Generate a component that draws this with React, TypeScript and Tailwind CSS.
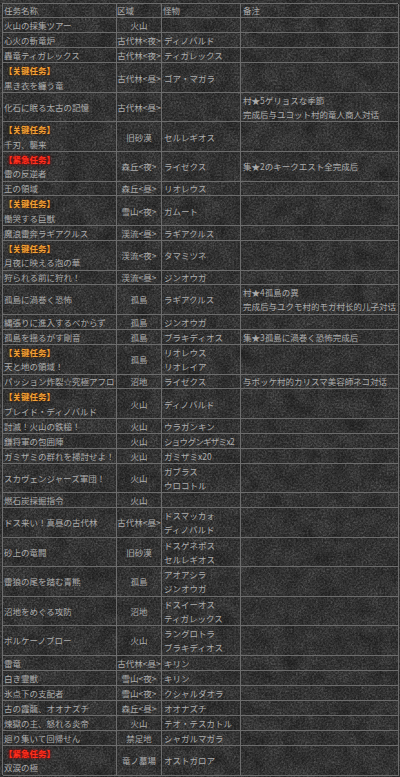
import React from 'react';

type Row = {
  tag?: 'key' | 'urgent';
  name: string;
  area: string;
  mons: string[];
  notes: string[];
  tight?: boolean;
};

const rows: Row[] = [
  { name: '火山の採集ツアー', area: '火山', mons: [], notes: [] },
  { name: '心火の斬竜炉', area: '古代林<夜>', mons: ['ディノバルド'], notes: [] },
  { name: '轟竜ティガレックス', area: '古代林<夜>', mons: ['ティガレックス'], notes: [] },
  { tag: 'key', name: '黒き衣を纏う竜', area: '古代林<昼>', mons: ['ゴア・マガラ'], notes: [] },
  { name: '化石に眠る太古の記憶', area: '古代林<昼>', mons: [], notes: ['村★5ゲリョスな季節', '完成后与ユコット村的竜人商人対话'] },
  { tag: 'key', name: '千刃、襲来', area: '旧砂漠', mons: ['セルレギオス'], notes: [] },
  { tag: 'urgent', name: '雷の反逆者', area: '森丘<夜>', mons: ['ライゼクス'], notes: ['集★2のキークエスト全完成后'] },
  { name: '王の領域', area: '森丘<昼>', mons: ['リオレウス'], notes: [] },
  { tag: 'key', name: '慟哭する巨獣', area: '雪山<夜>', mons: ['ガムート'], notes: [] },
  { name: '魔浪雷奔ラギアクルス', area: '渓流<昼>', mons: ['ラギアクルス'], notes: [] },
  { tag: 'key', name: '月夜に映える泡の華', area: '渓流<夜>', mons: ['タマミツネ'], notes: [] },
  { name: '狩られる前に狩れ！', area: '渓流<昼>', mons: ['ジンオウガ'], notes: [] },
  { name: '孤島に渦巻く恐怖', area: '孤島', mons: ['ラギアクルス'], notes: ['村★4孤島の異', '完成后与ユクモ村的モガ村长的儿子対话'] },
  { name: '縄張りに進入するべからず', area: '孤島', mons: ['ジンオウガ'], notes: [] },
  { name: '孤島を揺るがす剛音', area: '孤島', mons: ['ブラキディオス'], notes: ['集★3孤島に渦巻く恐怖完成后'] },
  { tag: 'key', name: '天と地の領域！', area: '孤島', mons: ['リオレウス', 'リオレイア'], notes: [] },
  { name: 'パッション炸裂☆究極アフロ', area: '沼地', mons: ['ライゼクス'], notes: ['与ポッケ村的カリスマ美容師ネコ対话'] },
  { tag: 'key', name: 'ブレイド・ディノバルド', area: '火山', mons: ['ディノバルド'], notes: [] },
  { name: '討滅！火山の鉄槌！', area: '火山', mons: ['ウラガンキン'], notes: [] },
  { name: '鎌将軍の包囲陣', area: '火山', mons: ['ショウグンギザミx2'], notes: [], tight: true },
  { name: 'ガミザミの群れを掃討せよ！', area: '火山', mons: ['ガミザミx20'], notes: [] },
  { name: 'スカヴェンジャーズ軍団！', area: '火山', mons: ['ガブラス', 'ウロコトル'], notes: [] },
  { name: '燃石炭採掘指令', area: '火山', mons: [], notes: [] },
  { name: 'ドス来い！真昼の古代林', area: '古代林<昼>', mons: ['ドスマッカォ', 'ディノバルド'], notes: [] },
  { name: '砂上の竜闘', area: '旧砂漠', mons: ['ドスゲネポス', 'セルレギオス'], notes: [] },
  { name: '雷狼の尾を踏む青熊', area: '孤島', mons: ['アオアシラ', 'ジンオウガ'], notes: [] },
  { name: '沼地をめぐる攻防', area: '沼地', mons: ['ドスイーオス', 'ティガレックス'], notes: [] },
  { name: 'ボルケーノブロー', area: '火山', mons: ['ラングロトラ', 'ブラキディオス'], notes: [] },
  { name: '雷竜', area: '古代林<昼>', mons: ['キリン'], notes: [] },
  { name: '白き霊獣', area: '雪山<夜>', mons: ['キリン'], notes: [] },
  { name: '氷点下の支配者', area: '雪山<夜>', mons: ['クシャルダオラ'], notes: [] },
  { name: '古の霞龍、オオナズチ', area: '森丘<昼>', mons: ['オオナズチ'], notes: [] },
  { name: '煉獄の主、怒れる炎帝', area: '火山', mons: ['テオ・テスカトル'], notes: [] },
  { name: '廻り集いて回帰せん', area: '禁足地', mons: ['シャガルマガラ'], notes: [] },
  { tag: 'urgent', name: '双涙の極', area: '竜ノ墓場', mons: ['オストガロア'], notes: [] },
];

const cell = 'border-r border-b border-[#6c6c6c] min-w-0';

function Label({ tag }: { tag: 'key' | 'urgent' }) {
  if (tag === 'key') {
    return (
      <span className="font-bold text-[#f2a23a] [text-shadow:0_0_2px_#5a2c00,0_0_1px_#3a1a00]">【关键任务】</span>
    );
  }
  return (
    <span className="font-bold text-[#ff3320] [text-shadow:0_0_3px_#c00000,0_0_1px_#700000]">【紧急任务】</span>
  );
}

export default function App() {
  return (
    <div className="relative w-[400px] h-[777px] overflow-hidden bg-[#2a2a2a] font-['Noto_Sans_CJK_JP','Noto_Sans_CJK_SC',sans-serif] text-[8.5px] text-[#adadad]">
      <svg className="absolute inset-0 w-full h-full" aria-hidden="true">
        <filter id="stone">
          <feTurbulence type="fractalNoise" baseFrequency="0.55" numOctaves="4" seed="7" />
          <feColorMatrix type="matrix" values="0 0 0 0 0.5  0 0 0 0 0.5  0 0 0 0 0.5  0.9 0.9 0.9 0 -1.05" />
        </filter>
        <filter id="stone2">
          <feTurbulence type="fractalNoise" baseFrequency="0.06" numOctaves="3" seed="3" />
          <feColorMatrix type="matrix" values="0 0 0 0 0  0 0 0 0 0  0 0 0 0 0  0.6 0.6 0.6 0 -0.7" />
        </filter>
        <rect width="100%" height="100%" filter="url(#stone)" opacity="0.35" />
        <rect width="100%" height="100%" filter="url(#stone2)" opacity="0.5" />
      </svg>

      <div className="relative ml-[2px] mt-[3px] w-[396px] border-t border-l border-[#6c6c6c]">
        <div className="grid grid-cols-[114px_45px_79px_158px] leading-[13px]">
          <div className={`${cell} pl-[1px] whitespace-nowrap`}>任务名称</div>
          <div className={`${cell} whitespace-nowrap`}>区域</div>
          <div className={`${cell} pl-[1px] whitespace-nowrap`}>怪物</div>
          <div className={`${cell} pl-[2px] whitespace-nowrap`}>备注</div>
        </div>
        {rows.map((r, i) => {
          const dbl = !!r.tag || r.mons.length > 1 || r.notes.length > 1;
          return (
            <div
              key={i}
              className={`grid grid-cols-[114px_45px_79px_158px] leading-[14px] ${dbl ? 'h-[29.5px]' : ''}`}
            >
              <div className={`${cell} flex flex-col justify-center whitespace-nowrap pl-[1px] ${r.tag ? 'leading-[14.5px]' : ''}`}>
                {r.tag && <Label tag={r.tag} />}
                <span>{r.name}</span>
              </div>
              <div className={`${cell} flex items-center justify-center text-center whitespace-nowrap`}>
                {r.area}
              </div>
              <div className={`${cell} flex flex-col justify-center whitespace-nowrap pl-[2px] ${r.tight ? 'tracking-[-0.7px]' : ''}`}>
                {r.mons.map((m, j) => (
                  <span key={j}>{m}</span>
                ))}
              </div>
              <div className={`${cell} flex flex-col justify-center whitespace-nowrap pl-[2px]`}>
                {r.notes.map((n, j) => (
                  <span key={j}>{n}</span>
                ))}
              </div>
            </div>
          );
        })}
      </div>
    </div>
  );
}
